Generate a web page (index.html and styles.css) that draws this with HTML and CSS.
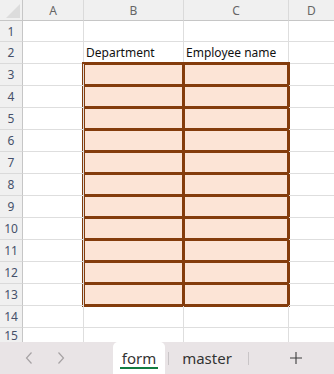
FILE: index.html
```html
<!DOCTYPE html>
<html>
<head>
<title>form</title>
<link rel="stylesheet" href="styles.css">
</head>
<body>
<div class="sheet">
  <div class="hd corner"><span class="tri"></span></div>
  <div class="hd col">A</div>
  <div class="hd col">B</div>
  <div class="hd col">C</div>
  <div class="hd col last">D</div>

  <div class="hd row">1</div><div class="c"></div><div class="c"></div><div class="c"></div><div class="c last"></div>
  <div class="hd row">2</div><div class="c"></div><div class="c txt">Department</div><div class="c txt">Employee name</div><div class="c last"></div>

  <!-- bordered, filled range B3:C13 -->
  <div class="range">
    <div></div><div></div><div></div><div></div><div></div><div></div>
    <div></div><div></div><div></div><div></div><div></div><div></div>
    <div></div><div></div><div></div><div></div><div></div><div></div>
    <div></div><div></div><div></div><div></div>
  </div>

  <div class="hd row">3</div><div class="c"></div><div class="c last"></div>
  <div class="hd row">4</div><div class="c"></div><div class="c last"></div>
  <div class="hd row">5</div><div class="c"></div><div class="c last"></div>
  <div class="hd row">6</div><div class="c"></div><div class="c last"></div>
  <div class="hd row">7</div><div class="c"></div><div class="c last"></div>
  <div class="hd row">8</div><div class="c"></div><div class="c last"></div>
  <div class="hd row">9</div><div class="c"></div><div class="c last"></div>
  <div class="hd row">10</div><div class="c"></div><div class="c last"></div>
  <div class="hd row">11</div><div class="c"></div><div class="c last"></div>
  <div class="hd row">12</div><div class="c"></div><div class="c last"></div>
  <div class="hd row">13</div><div class="c"></div><div class="c last"></div>
  <div class="hd row">14</div><div class="c"></div><div class="c"></div><div class="c"></div><div class="c last"></div>
  <div class="hd row">15</div><div class="c"></div><div class="c"></div><div class="c"></div><div class="c last"></div>
</div>

<div class="tabbar">
  <div class="nav">
    <svg width="10" height="14" viewBox="0 0 10 14"><path d="M7.5 1.5 L2.5 7 L7.5 12.5" fill="none" stroke="#a6a2a4" stroke-width="1.2"/></svg>
    <svg width="10" height="14" viewBox="0 0 10 14"><path d="M2.5 1.5 L7.5 7 L2.5 12.5" fill="none" stroke="#a6a2a4" stroke-width="1.2"/></svg>
  </div>
  <div class="tab active"><span>form</span></div>
  <div class="sep"></div>
  <div class="tab"><span>master</span></div>
  <div class="sep"></div>
  <div class="add">
    <svg width="14" height="14" viewBox="0 0 14 14"><path d="M7 1 V13 M1 7 H13" stroke="#3c3c3c" stroke-width="1.1" fill="none"/></svg>
  </div>
</div>
</body>
</html>
```

FILE: styles.css
```css
/* worksheet view */

body
{ margin: 0;
width: 334px;
height: 374px;
overflow: hidden;
background: #ffffff;
font-family: "Noto Sans", "Liberation Sans", sans-serif;
}

div.sheet
{ display: grid;
grid-template-columns: 23px 61px 100px 105px 1fr;
grid-template-rows: 21px 21px 22px repeat(12, 22px) 15px;
height: 342px;
overflow: hidden;
}

div.hd
{ background-color: #f0f0f0;
color: #666666;
display: flex;
align-items: center;
justify-content: center;
box-sizing: border-box;
}

div.col
{ font-size: 12px;
border-right: 1px solid #dadada;
border-bottom: 1px solid #c6c6c6;
padding-top: 1px;
}

div.col.last
{ border-right: none;
}

div.row
{ font-size: 12px;
color: #46506a;
border-right: 1px solid #c6c6c6;
border-bottom: 1px solid #dadada;
}

div.corner
{ border-right: 1px solid #c6c6c6;
border-bottom: 1px solid #c6c6c6;
position: relative;
}

span.tri
{ position: absolute;
right: 2px;
bottom: 2px;
width: 14px;
height: 14px;
background: #dcdcdc;
clip-path: polygon(100% 0, 100% 100%, 0 100%);
}

div.c
{ border-right: 1px solid #dedede;
border-bottom: 1px solid #dedede;
box-sizing: border-box;
}

div.c.last
{ border-right: none;
}

div.txt
{ font-size: 12px;
color: #111111;
display: flex;
align-items: flex-end;
padding: 0 0 2px 2px;
white-space: nowrap;
}

div.range
{ grid-column: 3 / 5;
grid-row: 4 / 15;
margin: -2px -1px -1px -2px;
display: grid;
grid-template-columns: 97px 1fr;
grid-template-rows: repeat(11, 1fr);
gap: 3px;
padding: 3px;
background-color: #843c0c;
}

div.range div
{ background-color: #fce4d6;
}

/* sheet tabs */

div.tabbar
{ height: 32px;
display: flex;
align-items: stretch;
background-color: #e9e4e6;
}

div.nav
{ width: 113px;
display: flex;
align-items: center;
gap: 22px;
padding-left: 24px;
box-sizing: border-box;
}

div.nav svg
{ display: block;
}

div.tab
{ display: flex;
align-items: center;
justify-content: center;
font-size: 15px;
color: #333333;
}

div.tab.active
{ width: 52px;
background-color: #ffffff;
border-radius: 5px 5px 0 0;
}

div.tab.active span
{ border-bottom: 2px solid #107c41;
line-height: 18px;
padding: 0 2px;
margin-top: 1px;
}

div.tab + div.sep
{ margin-left: 3px;
}

div.sep
{ width: 1px;
height: 13px;
align-self: center;
background-color: #c9c5c7;
}

div.tab:not(.active)
{ width: 76px;
}

div.add
{ flex: 1;
display: flex;
align-items: center;
justify-content: center;
padding-left: 8px;
}
```
